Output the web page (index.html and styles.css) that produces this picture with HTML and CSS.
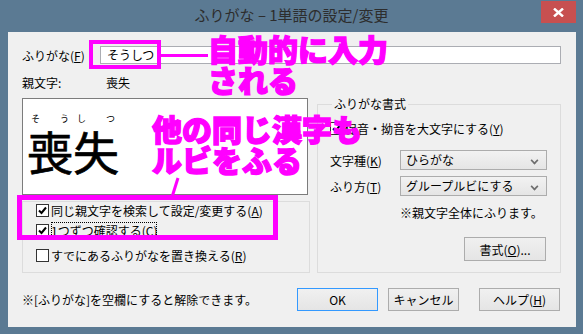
FILE: index.html
```html
<!DOCTYPE html>
<html lang="ja">
<head>
  <meta charset="UTF-8">
  <title>ふりがな – 1単語の設定/変更</title>
  <link rel="stylesheet" href="styles.css">
</head>
<body>

<div class="window">
  <div class="titlebar">
    <div class="title">ふりがな – 1単語の設定/変更</div>
    <div class="close">
      <svg width="11" height="9" viewBox="0 0 11 9"><path d="M1 0.5 L10 8.5 M10 0.5 L1 8.5" stroke="#fff" stroke-width="2.4"/></svg>
    </div>
  </div>

  <div class="content">
    <div class="fields">
      <span>ふりがな(<u>F</u>)</span>
      <div class="textbox">そうしつ</div>
      <span>親文字:</span>
      <span class="value">喪失</span>
    </div>

    <div class="main">
      <div class="left">
        <div class="preview">
          <div class="char">
            <div class="kana"><span>そ</span><span>う</span></div>
            <div class="kanji">喪</div>
          </div>
          <div class="char">
            <div class="kana"><span>し</span><span>つ</span></div>
            <div class="kanji">失</div>
          </div>
        </div>
        <div class="group plain">
          <div class="check-row"><span class="box checked"></span><span>同じ親文字を検索して設定/変更する(<u>A</u>)</span></div>
          <div class="check-row"><span class="box checked"></span><span class="focus">1つずつ確認する(<u>C</u>)</span></div>
          <div class="check-row last"><span class="box"></span><span>すでにあるふりがなを置き換える(<u>R</u>)</span></div>
        </div>
      </div>

      <fieldset class="group format">
        <legend>ふりがな書式</legend>
        <div class="check-row"><span class="box checked"></span><span>促音・拗音を大文字にする(<u>Y</u>)</span></div>
        <div class="selects">
          <span>文字種(<u>K</u>)</span>
          <div class="combo">ひらがな<span class="chev"></span></div>
          <span>ふり方(<u>T</u>)</span>
          <div class="combo">グループルビにする<span class="chev"></span></div>
        </div>
        <div class="hint">※親文字全体にふります。</div>
        <button class="btn format-btn">書式(<u>O</u>)...</button>
      </fieldset>
    </div>

    <div class="footer">
      <span>※[ふりがな]を空欄にすると解除できます。</span>
      <div class="buttons">
        <button class="btn default">OK</button>
        <button class="btn cancel">キャンセル</button>
        <button class="btn help">ヘルプ(<u>H</u>)</button>
      </div>
    </div>
  </div>

  <!-- annotations drawn over the dialog -->
  <div class="mark mark-input"></div>
  <div class="mark-line"></div>
  <div class="note note-input">自動的に入力<br>される</div>
  <div class="note note-same">他の同じ漢字も<br>ルビをふる</div>
  <svg class="mark-slash" width="12" height="22" viewBox="0 0 12 22"><path d="M9 1 L3 20" stroke="#ff00ff" stroke-width="3"/></svg>
  <div class="mark mark-checks"></div>
</div>

</body>
</html>
```

FILE: styles.css
```css
body {
  margin: 0;
  background: #5b7a93;
  font-family: "Noto Sans CJK JP", "Noto Sans", sans-serif;
}

.window {
  position: relative;
  width: 583px;
  height: 334px;
  background: #5b7a93;
}

.titlebar {
  height: 32px;
  display: flex;
  align-items: flex-start;
}

.title {
  flex: 1;
  padding-left: 42px;
  text-align: center;
  font-size: 15px;
  line-height: 30px;
  color: #2d2d2d;
}

.close {
  width: 35px;
  height: 22px;
  margin: 1px 7px 0 0;
  background: #c75050;
  display: flex;
  align-items: center;
  justify-content: center;
}

.content {
  margin: 0 7px 0 8px;
  height: 295px;
  box-sizing: border-box;
  padding: 14px 15px 0 14px;
  background: #f0f0f0;
  font-size: 12px;
  color: #000;
}

u {
  text-decoration: underline;
}

.fields {
  display: grid;
  grid-template-columns: 78px 1fr;
  grid-auto-rows: 18px;
  row-gap: 9px;
  align-items: center;
}

.textbox {
  height: 18px;
  box-sizing: border-box;
  border: 1px solid #abadb3;
  background: #fff;
  padding-left: 6px;
  line-height: 16px;
}

.value {
  padding-left: 6px;
}

.main {
  display: flex;
  gap: 7px;
  margin-top: 5px;
  height: 177px;
}

.left {
  width: 288px;
  padding-top: 2px;
  display: flex;
  flex-direction: column;
  gap: 6px;
}

.preview {
  height: 97px;
  width: 286px;
  box-sizing: border-box;
  border: 1px solid #7c7c7c;
  background: #fff;
  display: flex;
  padding: 15px 0 0 4px;
}

.char {
  width: 46px;
}

.kana {
  display: flex;
  justify-content: space-between;
  padding: 0 4px;
  font-size: 9px;
  line-height: 10px;
}

.kanji {
  font-size: 46px;
  line-height: 52px;
  -webkit-text-stroke: 0.7px #000;
}

.group {
  border: 1px solid #dcdcdc;
  box-sizing: border-box;
}

.plain {
  flex: 1;
  padding: 0 0 0 13px;
  display: flex;
  flex-direction: column;
  gap: 4px;
}

.check-row {
  display: flex;
  align-items: center;
  height: 16px;
  white-space: nowrap;
}

.check-row.last {
  margin-top: 5px;
}

.box {
  width: 13px;
  height: 13px;
  box-sizing: border-box;
  border: 1px solid #333;
  background: #fff;
  margin-right: 2px;
}

.box.checked {
  background: #fff url("data:image/svg+xml,%3Csvg xmlns='http://www.w3.org/2000/svg' width='11' height='11'%3E%3Cpath d='M2 5.5 L4.5 8 L9 2.5' fill='none' stroke='%23000' stroke-width='2'/%3E%3C/svg%3E") center no-repeat;
}

.focus {
  outline: 1px dotted #000;
  outline-offset: -1px;
}

.format {
  margin: 0;
  width: 244px;
  padding: 8px 13px 0 12px;
  display: flex;
  flex-direction: column;
}

.format legend {
  padding: 0 2px;
  margin-left: 2px;
  line-height: 16px;
}

.selects {
  display: grid;
  grid-template-columns: 70px 1fr;
  grid-auto-rows: 20px;
  row-gap: 6px;
  align-items: center;
  margin-top: 14px;
}

.combo {
  position: relative;
  height: 20px;
  box-sizing: border-box;
  border: 1px solid #acacac;
  background: linear-gradient(#f2f2f2, #e5e5e5);
  padding-left: 5px;
  line-height: 18px;
}

.chev {
  position: absolute;
  right: 8px;
  top: 6px;
  width: 5px;
  height: 5px;
  border-right: 2px solid #6d6d6d;
  border-bottom: 2px solid #6d6d6d;
  transform: rotate(45deg) scale(0.8);
}

.hint {
  margin: 9px 0 0 70px;
  line-height: 16px;
}

.btn {
  font-family: inherit;
  font-size: 12px;
  height: 23px;
  padding: 0;
  border: 1px solid #acacac;
  background: linear-gradient(#f0f0f0, #e5e5e5);
  color: #000;
}

.format-btn {
  align-self: flex-end;
  width: 82px;
  height: 24px;
  margin: 16px 1px 0 0;
}

.footer {
  display: flex;
  justify-content: space-between;
  align-items: center;
  margin-top: 15px;
}

.buttons {
  display: flex;
  margin-right: 1px;
}

.btn.default {
  width: 81px;
  border-color: #3399ff;
}

.btn.cancel {
  width: 71px;
  margin-left: 10px;
}

.btn.help {
  width: 81px;
  margin-left: 20px;
}

.mark {
  position: absolute;
  border: 4px solid #ff00ff;
  box-sizing: border-box;
}

.mark-input {
  left: 89px;
  top: 40px;
  width: 72px;
  height: 29px;
}

.mark-line {
  position: absolute;
  left: 161px;
  top: 54px;
  width: 47px;
  height: 3px;
  background: #ff00ff;
}

.mark-checks {
  left: 17px;
  top: 195px;
  width: 261px;
  height: 45px;
  border-width: 5px;
}

.mark-slash {
  position: absolute;
  left: 169px;
  top: 177px;
}

.note {
  position: absolute;
  color: #ff00ff;
  font-size: 30px;
  font-weight: 900;
  line-height: 31px;
  white-space: nowrap;
  -webkit-text-stroke: 1.4px #ff00ff;
}

.note-input {
  left: 208px;
  top: 33px;
}

.note-same {
  left: 152px;
  top: 113px;
}
```
